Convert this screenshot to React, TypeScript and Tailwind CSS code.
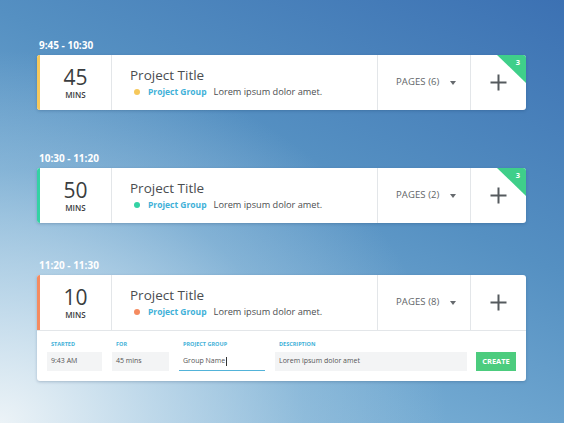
import React from "react";

type Item = {
  time: string;
  mins: string;
  accent: string;
  pages: string;
  badge?: boolean;
  mt: string;
  form?: boolean;
};

const items: Item[] = [
  { time: "9:45 - 10:30", mins: "45", accent: "bg-[#f6c85b]", pages: "PAGES (6)", badge: true, mt: "mt-[38px]" },
  { time: "10:30 - 11:20", mins: "50", accent: "bg-[#34d2a4]", pages: "PAGES (2)", badge: true, mt: "mt-[41px]" },
  { time: "11:20 - 11:30", mins: "10", accent: "bg-[#f58b60]", pages: "PAGES (8)", form: true, mt: "mt-[35px]" },
];

function Plus() {
  return (
    <svg width="17" height="17" viewBox="0 0 17 17" className="text-[#555a5e]">
      <path d="M8.5 0.5v16M0.5 8.5h16" stroke="currentColor" strokeWidth="2" fill="none" />
    </svg>
  );
}

function Card({ it }: { it: Item }) {
  return (
    <div className={it.mt}>
      <div className="h-[14px] leading-[14px] text-[10px] font-bold text-white pl-[2px] mb-[3px]">{it.time}</div>
      <div className="relative bg-white rounded-[3px] overflow-hidden shadow-[0_1px_3px_rgba(20,50,90,0.25)]">
        <div className="flex h-[55px]">
          <div className={`w-[3px] ${it.accent}`} />
          <div className="w-[72px] flex flex-col items-center justify-center border-r border-[#e3e6e9]">
            <div className="text-[21px] leading-[22px] text-[#3a3d40]">{it.mins}</div>
            <div className="text-[8px] leading-[9px] font-semibold text-[#3a3d40] mt-[2px]">MINS</div>
          </div>
          <div className="w-[266px] flex flex-col justify-center pl-[18px] border-r border-[#e3e6e9]">
            <div className="text-[13.5px] leading-[18px] text-[#4a4d50]">Project Title</div>
            <div className="flex items-center mt-[1px]">
              <span className={`w-[6px] h-[6px] rounded-full ${it.accent} ml-[4px] mr-[8px]`} />
              <span className="text-[8.5px] font-bold text-[#3fb1d8]">Project Group</span>
              <span className="text-[9.2px] text-[#4a4d50] ml-[7px]">Lorem ipsum dolor amet.</span>
            </div>
          </div>
          <div className="w-[93px] flex items-center border-r border-[#e3e6e9] pl-[18px]">
            <span className="text-[9.5px] text-[#616568] tracking-[0.1px]">{it.pages}</span>
            <svg width="6" height="4" viewBox="0 0 6 4" className="ml-[10px] mt-[1px]">
              <path d="M0 0h6L3 4z" fill="#666a6e" />
            </svg>
          </div>
          <div className="flex-1 flex items-center justify-center">
            <Plus />
          </div>
        </div>
        {it.badge && (
          <div className="absolute top-0 right-0 w-[29px] h-[28px]">
            <svg width="29" height="28" viewBox="0 0 29 28" className="absolute inset-0">
              <path d="M0 0h29v28z" fill="#3fcf8a" />
            </svg>
            <span className="absolute right-[6px] top-[2px] text-[7.5px] font-bold text-white leading-[10px]">3</span>
          </div>
        )}
        {it.form && (
          <div className="border-t border-[#e3e6e9] px-[10px] pt-[9px] pb-[10px]">
            <div className="flex gap-[10px] items-end">
              <div className="w-[55px]">
                <div className="text-[5.5px] font-bold text-[#3fb1d8] leading-[8px] mb-[4px] pl-[4px]">STARTED</div>
                <div className="h-[19px] bg-[#f3f4f5] text-[7px] text-[#555] flex items-center pl-[4px]">9:43 AM</div>
              </div>
              <div className="w-[57px]">
                <div className="text-[5.5px] font-bold text-[#3fb1d8] leading-[8px] mb-[4px] pl-[4px]">FOR</div>
                <div className="h-[19px] bg-[#f3f4f5] text-[7px] text-[#555] flex items-center pl-[4px]">45 mins</div>
              </div>
              <div className="w-[86px]">
                <div className="text-[5.5px] font-bold text-[#3fb1d8] leading-[8px] mb-[4px] pl-[4px]">PROJECT GROUP</div>
                <div className="h-[19px] bg-white border-b border-[#52b3d9] text-[7px] text-[#555] flex items-center pl-[4px]">
                  Group Name<span className="w-px h-[9px] bg-[#333] ml-[1px]" />
                </div>
              </div>
              <div className="w-[192px]">
                <div className="text-[5.5px] font-bold text-[#3fb1d8] leading-[8px] mb-[4px] pl-[4px]">DESCRIPTION</div>
                <div className="h-[19px] bg-[#f3f4f5] text-[7px] text-[#555] flex items-center pl-[4px]">Lorem ipsum dolor amet</div>
              </div>
              <div className="ml-[-1px] w-[40px] h-[19px] bg-[#4ccc7e] text-white text-[7.5px] font-bold flex items-center justify-center">CREATE</div>
            </div>
          </div>
        )}
      </div>
    </div>
  );
}

export default function App() {
  return (
    <div
      className="w-[564px] h-[423px] overflow-hidden bg-[radial-gradient(ellipse_90%_100%_at_0%_100%,rgba(236,243,247,1)_0%,rgba(210,228,240,0.75)_30%,rgba(180,210,230,0.35)_60%,rgba(180,210,230,0)_88%),linear-gradient(205deg,#3c71b3_0%,#5590c2_40%,#73aad2_70%,#8cbcdb_100%)]"
      style={{ fontFamily: '"Open Sans", "Noto Sans", sans-serif' }}
    >
      <div className="w-[489px] ml-[37px]">
        {items.map((it) => (
          <Card key={it.time} it={it} />
        ))}
      </div>
    </div>
  );
}
